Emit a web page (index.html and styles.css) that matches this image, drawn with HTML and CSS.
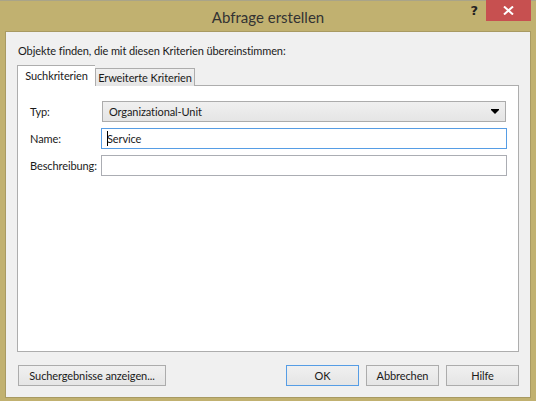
FILE: index.html
```html
<!DOCTYPE html>
<html lang="de">
<head>
<meta charset="utf-8">
<title>Abfrage erstellen</title>
<link rel="stylesheet" href="styles.css">
</head>
<body>
<div class="window">
  <div class="titlebar">
    <div class="spacer"></div>
    <div class="title">Abfrage erstellen</div>
    <div class="controls">
      <span class="help">?</span>
      <span class="close">
        <svg width="11" height="9" viewBox="0 0 11 9"><path d="M1 0.5 L10 8.5 M10 0.5 L1 8.5" stroke="#fff" stroke-width="2"/></svg>
      </span>
    </div>
  </div>
  <div class="client">
    <div class="caption">Objekte finden, die mit diesen Kriterien übereinstimmen:</div>
    <div class="tabs">
      <div class="tab active">Suchkriterien</div>
      <div class="tab">Erweiterte Kriterien</div>
    </div>
    <div class="panel">
      <div class="form">
        <label class="lbl">Typ:</label>
        <div class="combo">
          <span>Organizational-Unit</span>
          <svg class="arrow" width="8" height="5" viewBox="0 0 8 5"><path d="M0 0 H8 V1 L4 5 L0 1 Z" fill="#000"/></svg>
        </div>
        <label class="lbl">Name:</label>
        <div class="input focus"><span class="caret"></span>Service</div>
        <label class="lbl">Beschreibung:</label>
        <div class="input"></div>
      </div>
    </div>
    <div class="buttons">
      <button class="btn wide">Suchergebnisse anzeigen...</button>
      <div class="grow"></div>
      <button class="btn default">OK</button>
      <button class="btn">Abbrechen</button>
      <button class="btn">Hilfe</button>
    </div>
  </div>
</div>
</body>
</html>
```

FILE: styles.css
```css
html, body {
  margin: 0;
  padding: 0;
  background: #c1b170;
}
body {
  font-family: "Lato", "Noto Sans", sans-serif;
  font-size: 11px;
  letter-spacing: -0.1px;
  color: #1a1a1a;
  white-space: nowrap;
}
.window {
  width: 536px;
  height: 401px;
  box-sizing: border-box;
  background: #c1b170;
  border-top: 1px solid #a9a489;
  display: flex;
  flex-direction: column;
}
.titlebar {
  height: 30px;
  display: grid;
  grid-template-columns: 1fr auto 1fr;
  align-items: start;
}
.title {
  font-size: 15px;
  letter-spacing: 0;
  color: #333;
  line-height: 30px;
  padding-top: 1px;
}
.controls {
  display: flex;
  justify-content: flex-end;
  align-items: flex-start;
  margin-top: -1px;
  padding-right: 5px;
}
.help {
  font-family: "DejaVu Sans", sans-serif;
  font-weight: bold;
  font-size: 13px;
  letter-spacing: 0;
  color: #222;
  margin-top: 3px;
  margin-right: 8px;
}
.close {
  width: 45px;
  height: 21px;
  background: #c75050;
  display: flex;
  align-items: center;
  justify-content: center;
}
.client {
  flex: 1;
  margin: 0 5px 3px 5px;
  background: #f0f0f0;
  border: 1px solid #a89a62;
  padding: 11px 11px 0 11px;
  display: flex;
  flex-direction: column;
}
.caption {
  line-height: 15px;
  padding-left: 1px;
}
.tabs {
  display: flex;
  align-items: flex-end;
  margin-top: 7px;
  height: 21px;
  position: relative;
  z-index: 1;
  margin-bottom: -1px;
}
.tab {
  box-sizing: border-box;
  height: 18px;
  width: 100px;
  border: 1px solid #adadad;
  border-bottom: none;
  background: linear-gradient(#f0f0f0, #e5e5e5);
  text-align: center;
  line-height: 17px;
}
.tab.active {
  width: 78px;
  height: 21px;
  background: #fff;
  line-height: 19px;
  border-right: none;
}
.panel {
  height: 267px;
  box-sizing: border-box;
  background: #fff;
  border: 1px solid #adadad;
  padding: 15px 11px 0 12px;
}
.form {
  display: grid;
  grid-template-columns: 71px 1fr;
  row-gap: 6px;
  align-items: center;
}
.lbl {
  line-height: 21px;
}
.combo {
  box-sizing: border-box;
  height: 21px;
  margin: 0 1px;
  border: 1px solid #acacac;
  background: linear-gradient(#f0f0f0, #e5e5e5);
  display: flex;
  align-items: center;
  padding: 0 6px;
}
.combo span { flex: 1; }
.input {
  box-sizing: border-box;
  height: 21px;
  border: 1px solid #abadb3;
  background: #fff;
  padding: 0 6px 0 5px;
  line-height: 19px;
  position: relative;
}
.input.focus { border-color: #569de5; }
.caret {
  position: absolute;
  left: 5px;
  top: 2px;
  width: 1px;
  height: 15px;
  background: #000;
}
.buttons {
  display: flex;
  gap: 7px;
  margin-top: 13px;
  padding-left: 1px;
}
.grow { flex: 1; }
.btn {
  font: inherit;
  letter-spacing: inherit;
  color: #1a1a1a;
  box-sizing: border-box;
  height: 21px;
  width: 73px;
  border: 1px solid #acacac;
  background: linear-gradient(#f0f0f0, #e5e5e5);
  padding: 0;
}
.btn.wide { width: 148px; }
.btn.default { border-color: #569de5; }
```
